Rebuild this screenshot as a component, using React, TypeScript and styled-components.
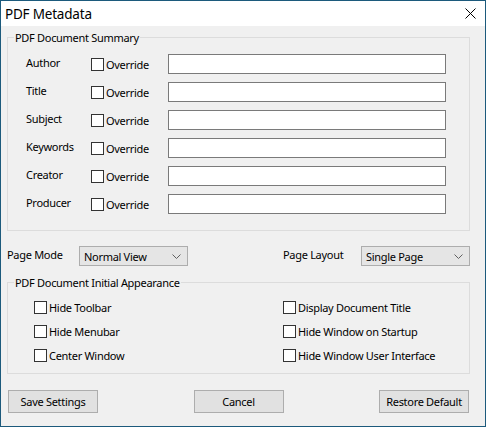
import { FunctionComponent } from "react";
import styled, { createGlobalStyle } from "styled-components";

const GlobalStyle = createGlobalStyle`
  html, body {
    margin: 0;
    padding: 0;
    background: #f0f0f0;
  }
  body {
    font-family: "Noto Sans", "Open Sans", sans-serif;
    font-size: 11px;
    letter-spacing: -0.3px;
    color: #000;
  }
`;

const WindowRoot = styled.div`
  width: 486px;
  height: 427px;
  box-sizing: border-box;
  border: 1px solid #1c5a7c;
  display: flex;
  flex-direction: column;
  background: #f0f0f0;
  overflow: hidden;
`;
const TitleBar = styled.div`
  height: 25px;
  flex-shrink: 0;
  background: #fff;
  display: flex;
  align-items: center;
  justify-content: space-between;
  padding: 0 9px 0 4px;
`;
const TitleText = styled.div`
  font-size: 13.5px;
  letter-spacing: -0.2px;
  color: #000;
`;
const Body = styled.div`
  flex: 1;
  display: flex;
  flex-direction: column;
  padding: 11px 15px 0 6px;
`;
const GroupBox = styled.div<{ $pad: string }>`
  position: relative;
  border: 1px solid #dcdcdc;
  padding: ${(p) => p.$pad};
`;
const Legend = styled.div`
  position: absolute;
  top: -8px;
  left: 6px;
  padding: 0 1px;
  background: #f0f0f0;
  line-height: 15px;
`;
const SummaryRow = styled.div`
  height: 28px;
  display: flex;
  align-items: flex-start;
`;
const FieldLabel = styled.div`
  width: 65px;
  padding-left: 18px;
  line-height: 18px;
`;
const CheckLabel = styled.label<{ $width?: string }>`
  display: flex;
  align-items: center;
  gap: 2px;
  width: ${(p) => p.$width ?? "auto"};
  height: 20px;
`;
const Box = styled.span`
  width: 13px;
  height: 13px;
  box-sizing: border-box;
  border: 1px solid #333;
  background: #fff;
  flex-shrink: 0;
`;
const TextBox = styled.div`
  width: 278px;
  height: 20px;
  box-sizing: border-box;
  border: 1px solid #7a7a7a;
  background: #fff;
`;
const ModeRow = styled.div`
  display: flex;
  align-items: center;
  margin: 15px 0 16px 0;
  height: 20px;
`;
const ModeLabel = styled.div<{ $width: string }>`
  width: ${(p) => p.$width};
  line-height: 14px;
  margin-top: -2px;
`;
const Combo = styled.div`
  width: 109px;
  height: 20px;
  box-sizing: border-box;
  border: 1px solid #adadad;
  background: #e5e5e5;
  display: flex;
  align-items: center;
  justify-content: space-between;
  padding: 0 6px 0 4px;
`;
const Spacer = styled.div`
  flex: 1;
`;
const AppearanceGrid = styled.div`
  display: grid;
  grid-template-columns: 249px 1fr;
  grid-auto-rows: 24px;
  align-items: center;
`;
const ButtonRow = styled.div`
  display: flex;
  justify-content: space-between;
  margin: 16px 1px 0 1px;
`;
const Button = styled.div`
  width: 90px;
  height: 23px;
  box-sizing: border-box;
  border: 1px solid #adadad;
  background: #e1e1e1;
  display: flex;
  align-items: center;
  justify-content: center;
`;

const Check: FunctionComponent<{ label: string }> = ({ label }) => (
  <CheckLabel>
    <Box />
    {label}
  </CheckLabel>
);

const Chevron = () => (
  <svg width="9" height="5" viewBox="0 0 9 5">
    <path d="M0.5 0.5 L4.5 4.5 L8.5 0.5" fill="none" stroke="#606060" strokeWidth="1" />
  </svg>
);

const fields = ["Author", "Title", "Subject", "Keywords", "Creator", "Producer"];

const App: FunctionComponent = () => {
  return (
    <>
      <GlobalStyle />
      <WindowRoot>
        <TitleBar>
          <TitleText>PDF Metadata</TitleText>
          <svg width="11" height="11" viewBox="0 0 11 11">
            <path d="M0.5 0.5 L10.5 10.5 M10.5 0.5 L0.5 10.5" stroke="#000" strokeWidth="1" />
          </svg>
        </TitleBar>
        <Body>
          <GroupBox $pad="16px 0 8px 0">
            <Legend>PDF Document Summary</Legend>
            {fields.map((f) => (
              <SummaryRow key={f}>
                <FieldLabel>{f}</FieldLabel>
                <CheckLabel $width="77px">
                  <Box />
                  Override
                </CheckLabel>
                <TextBox />
              </SummaryRow>
            ))}
          </GroupBox>
          <ModeRow>
            <ModeLabel $width="72px">Page Mode</ModeLabel>
            <Combo>
              Normal View
              <Chevron />
            </Combo>
            <Spacer />
            <ModeLabel $width="78px">Page Layout</ModeLabel>
            <Combo>
              Single Page
              <Chevron />
            </Combo>
          </ModeRow>
          <GroupBox $pad="12px 0 6px 26px">
            <Legend>PDF Document Initial Appearance</Legend>
            <AppearanceGrid>
              <Check label="Hide Toolbar" />
              <Check label="Display Document Title" />
              <Check label="Hide Menubar" />
              <Check label="Hide Window on Startup" />
              <Check label="Center Window" />
              <Check label="Hide Window User Interface" />
            </AppearanceGrid>
          </GroupBox>
          <ButtonRow>
            <Button>Save Settings</Button>
            <Button>Cancel</Button>
            <Button>Restore Default</Button>
          </ButtonRow>
        </Body>
      </WindowRoot>
    </>
  );
};

export default App;
